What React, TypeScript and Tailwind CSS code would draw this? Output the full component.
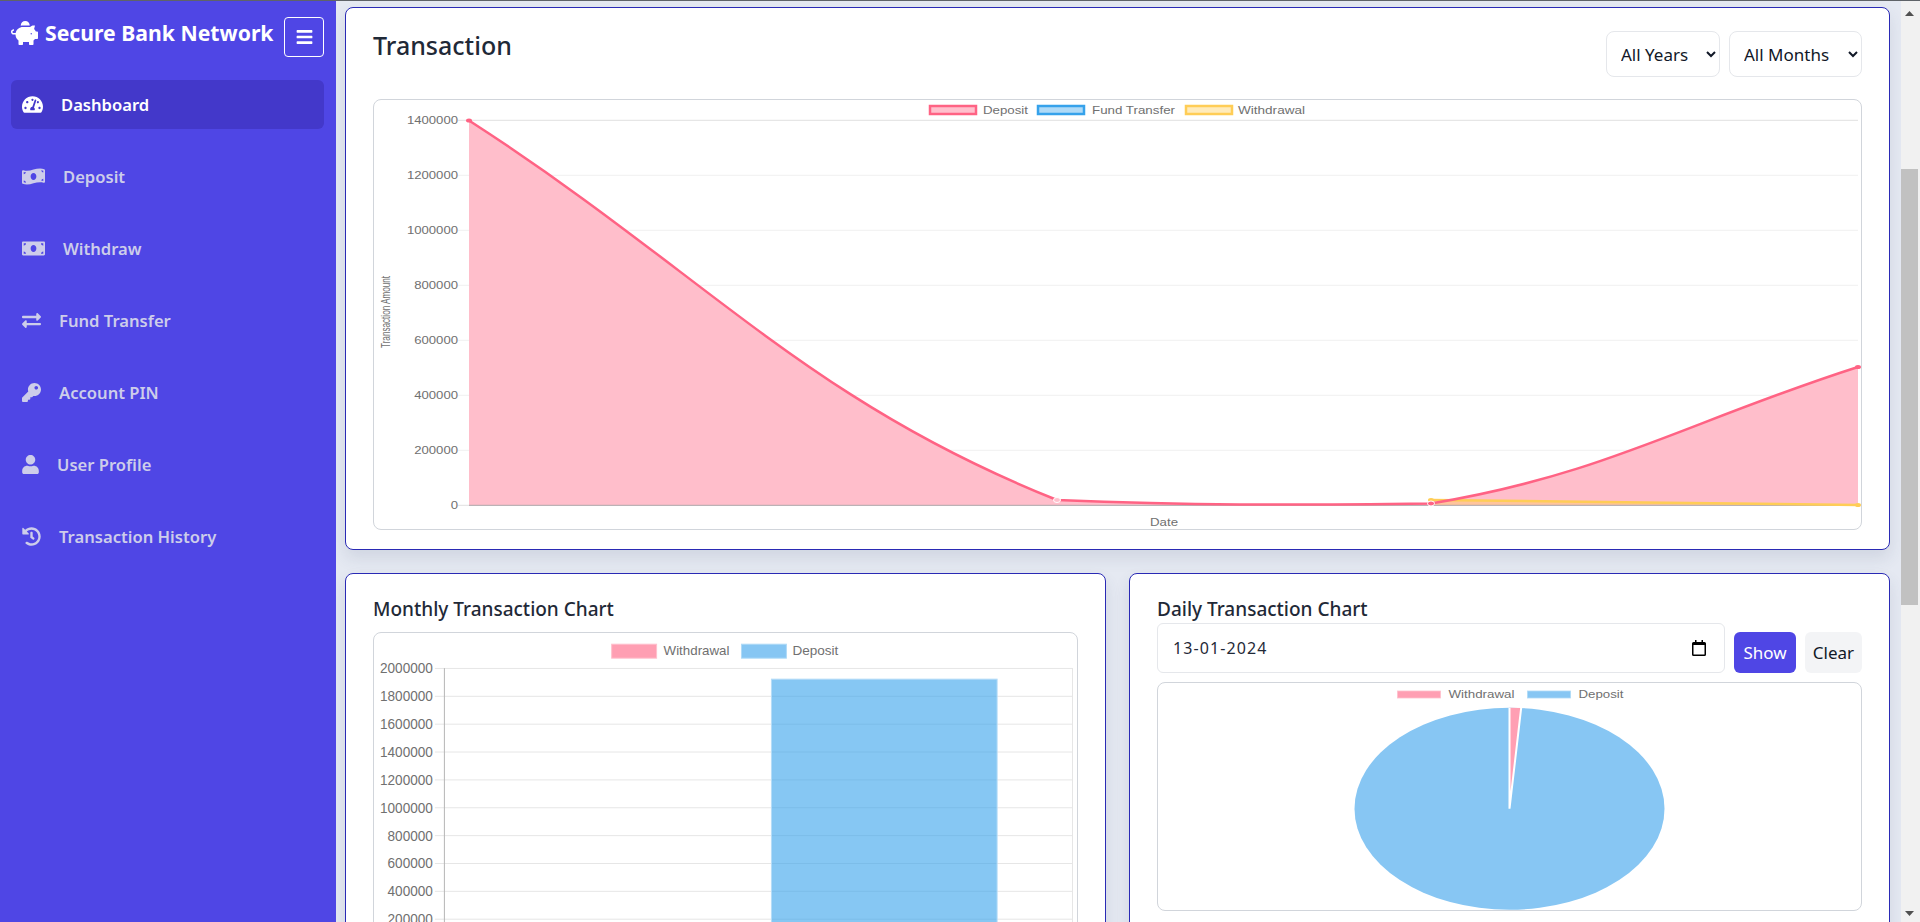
import {
  FaBars,
  FaExchangeAlt,
  FaHistory,
  FaKey,
  FaMoneyBill,
  FaMoneyBillWave,
  FaPiggyBank,
  FaTachometerAlt,
  FaUser,
} from 'react-icons/fa'
import type { IconType } from 'react-icons'

const NAV: { label: string; Icon: IconType; size: string; active?: boolean }[] = [
  { label: 'Dashboard', Icon: FaTachometerAlt, size: 'w-[21px] h-[21px]', active: true },
  { label: 'Deposit', Icon: FaMoneyBillWave, size: 'w-[23px] h-[21px]' },
  { label: 'Withdraw', Icon: FaMoneyBill, size: 'w-[23px] h-[21px]' },
  { label: 'Fund Transfer', Icon: FaExchangeAlt, size: 'w-[19px] h-[19px]' },
  { label: 'Account PIN', Icon: FaKey, size: 'w-[19px] h-[19px]' },
  { label: 'User Profile', Icon: FaUser, size: 'w-[17px] h-[19px]' },
  { label: 'Transaction History', Icon: FaHistory, size: 'w-[19px] h-[19px]' },
]

const FONT = 'font-["Noto_Sans","Open_Sans",sans-serif]'

type Pt = [number, number]

const ZERO = 505.3

// same spline chart.js draws with tension 0.4, control points capped to the plot area
function spline(pts: Pt[], t = 0.4) {
  const dist = (a: Pt, b: Pt) => Math.hypot(a[0] - b[0], a[1] - b[1])
  const cap = (v: number) => Math.min(v, ZERO)
  const ctrl = pts.map((p, i) => {
    const prev = pts[i - 1] ?? p
    const next = pts[i + 1] ?? p
    const d01 = dist(prev, p)
    const d12 = dist(p, next)
    const sum = d01 + d12 || 1
    const dx = next[0] - prev[0]
    const dy = next[1] - prev[1]
    return {
      out: [p[0] + (t * d12 / sum) * dx, cap(p[1] + (t * d12 / sum) * dy)] as Pt,
      in: [p[0] - (t * d01 / sum) * dx, cap(p[1] - (t * d01 / sum) * dy)] as Pt,
    }
  })
  let d = `M${pts[0][0]} ${pts[0][1]}`
  for (let i = 1; i < pts.length; i++) {
    const a = ctrl[i - 1].out
    const b = ctrl[i].in
    d += ` C${a[0]} ${a[1]} ${b[0]} ${b[1]} ${pts[i][0]} ${pts[i][1]}`
  }
  return d
}

const DEPOSIT: Pt[] = [[469, 120.5], [1057, 500], [1431, 503.5], [1858, 367]]
const WITHDRAW: Pt[] = [[1431, 500], [1858, 505]]

const LEGEND = [
  { x: 929, text: 983, w: 45, label: 'Deposit', stroke: '#ff6384', fill: '#ffc0cd' },
  { x: 1037, text: 1092, w: 83, label: 'Fund Transfer', stroke: '#36a2eb', fill: '#afdaf7' },
  { x: 1185, text: 1238, w: 67, label: 'Withdrawal', stroke: '#ffcd56', fill: '#ffebbb' },
]

function TransactionChart() {
  const ticks = [1400000, 1200000, 1000000, 800000, 600000, 400000, 200000, 0]
  return (
    <svg viewBox="374 100 1487 429" className="block w-full h-[429px]">
      {ticks.map((v, i) => {
        const y = 120.3 + i * 55
        const w = String(v).length * 7.3
        return (
          <g key={v}>
            <line x1={458} x2={1858} y1={y} y2={y} stroke={i === 0 || i === 7 ? '#e0e0e0' : '#f0f0f0'} strokeWidth={1} />
            <text x={458 - w} y={y + 3.5} fontSize={10} fill="#707070" fontFamily="Liberation Sans" textLength={w} lengthAdjust="spacingAndGlyphs">{v}</text>
          </g>
        )
      })}
      <path d={`${spline(DEPOSIT)} L1858 ${ZERO} L469 ${ZERO} Z`} fill="#ffbecb" />
      <path d={`${spline(WITHDRAW)} L1858 ${ZERO} L1431 ${ZERO} Z`} fill="#ffcd56" fillOpacity={0.4} />
      <line x1={469} x2={1858} y1={ZERO} y2={ZERO} stroke="#b0a8ac" />
      <path d={spline(WITHDRAW)} fill="none" stroke="#ffcd56" strokeWidth={2.5} />
      <path d={spline(DEPOSIT)} fill="none" stroke="#ff6384" strokeWidth={2.5} />
      <ellipse cx={469} cy={120.5} rx={3} ry={2} fill="#ff6384" />
      <ellipse cx={1057} cy={500} rx={3.5} ry={2.5} fill="#ffc0cd" stroke="#fff" />
      <ellipse cx={1431} cy={500} rx={3} ry={2} fill="#ffcd56" />
      <ellipse cx={1431} cy={503.5} rx={3.5} ry={2.5} fill="#ff6384" stroke="#fff" />
      <ellipse cx={1858} cy={367} rx={3} ry={2} fill="#ff6384" />
      <ellipse cx={1858} cy={505} rx={3} ry={2} fill="#ffcd56" />
      {LEGEND.map((l) => (
        <g key={l.label}>
          <rect x={l.x + 1} y={106} width={46} height={8} fill={l.fill} stroke={l.stroke} strokeWidth={2.5} />
          <text x={l.text} y={113.5} fontSize={10} fill="#707070" fontFamily="Liberation Sans" textLength={l.w} lengthAdjust="spacingAndGlyphs">{l.label}</text>
        </g>
      ))}
      <text x={1150} y={525.5} fontSize={10} fill="#707070" fontFamily="Liberation Sans" textLength={28} lengthAdjust="spacingAndGlyphs">Date</text>
      <text transform="translate(390 348) rotate(-90)" fontSize={13} fill="#707070" fontFamily="Liberation Sans" textLength={72} lengthAdjust="spacingAndGlyphs">Transaction Amount</text>
    </svg>
  )
}

function MonthlyChart() {
  const ticks = [2000000, 1800000, 1600000, 1400000, 1200000, 1000000, 800000, 600000, 400000, 200000]
  return (
    <svg viewBox="374 633 704 300" className="block w-full h-[300px]">
      {ticks.map((v, i) => {
        const y = 668.3 + i * 27.9
        const w = String(v).length * 7.57
        return (
          <g key={v}>
            <line x1={435} x2={1074} y1={y} y2={y} stroke="#e6e6e6" />
            <text x={433 - w} y={y + 5} fontSize={14} fill="#707070" fontFamily="Liberation Sans" textLength={w} lengthAdjust="spacingAndGlyphs">{v}</text>
          </g>
        )
      })}
      <line x1={444.5} x2={444.5} y1={668} y2={933} stroke="#b5b5b5" />
      <line x1={1073.5} x2={1073.5} y1={668} y2={933} stroke="#e6e6e6" />
      <rect x={772} y={679} width={226} height={254} fill="#36a2eb" fillOpacity={0.6} stroke="#b5dcf7" />
      <rect x={612} y={644} width={45} height={14} fill="#ff9fb3" stroke="#ffc0cd" />
      <text x={664} y={655} fontSize={13.5} fill="#707070" fontFamily="Liberation Sans" textLength={66} lengthAdjust="spacingAndGlyphs">Withdrawal</text>
      <rect x={742} y={644} width={45} height={14} fill="#86c6f3" stroke="#afdaf7" />
      <text x={793} y={655} fontSize={13.5} fill="#707070" fontFamily="Liberation Sans" textLength={46} lengthAdjust="spacingAndGlyphs">Deposit</text>
    </svg>
  )
}

function DailyChart() {
  // slice edges on an ellipse, the canvas is stretched
  const cx = 1509
  const cy = 808.7
  const rx = 155
  const ry = 101
  const a = (1.2 / 100) * Math.PI * 2
  const ex = cx + rx * Math.sin(a)
  const ey = cy - ry * Math.cos(a)
  return (
    <svg viewBox="1158 683 702 227" className="block w-full h-[227px]">
      <ellipse cx={cx} cy={cy} rx={rx} ry={ry} fill="#87c6f3" />
      <path d={`M${cx} ${cy} L${cx} ${cy - ry} A${rx} ${ry} 0 0 1 ${ex} ${ey} Z`} fill="#ff9fb3" />
      <path d={`M${cx} ${cy} L${cx} ${cy - ry} M${cx} ${cy} L${ex} ${ey}`} stroke="#fff" strokeWidth={2} fill="none" />
      <rect x={1397} y={691} width={43} height={7} fill="#ff9fb3" stroke="#ffc0cd" strokeWidth={0.8} />
      <text x={1448} y={697.5} fontSize={10.5} fill="#707070" fontFamily="Liberation Sans" textLength={66} lengthAdjust="spacingAndGlyphs">Withdrawal</text>
      <rect x={1527} y={691} width={43} height={7} fill="#87c6f3" stroke="#afdaf7" strokeWidth={0.8} />
      <text x={1578} y={697.5} fontSize={10.5} fill="#707070" fontFamily="Liberation Sans" textLength={45} lengthAdjust="spacingAndGlyphs">Deposit</text>
    </svg>
  )
}

function CalendarIcon() {
  return (
    <svg width="14" height="16" viewBox="0 0 14 16" className="text-black">
      <path d="M3 0h1.5v2h5V0H11v2h1.5A1.5 1.5 0 0 1 14 3.5v11a1.5 1.5 0 0 1-1.5 1.5h-11A1.5 1.5 0 0 1 0 14.5v-11A1.5 1.5 0 0 1 1.5 2H3zM1.5 5v9.5h11V5z" fill="currentColor" fillRule="evenodd" />
    </svg>
  )
}

function Sidebar() {
  return (
    <aside className="w-[336px] shrink-0 bg-[#4f46e5] pl-[11px] pr-[12px] pt-[16px]">
      <div className="flex items-start justify-between h-[40px] mb-[23px]">
        <div className="flex items-center h-[32px] gap-[7px] text-white">
          <FaPiggyBank className="w-[27px] h-[24px]" />
          <span className="text-[21.2px] font-bold leading-none">Secure Bank Network</span>
        </div>
        <button className="w-[40px] h-[40px] flex items-center justify-center border border-white rounded text-white">
          <FaBars className="w-[17px] h-[18px]" />
        </button>
      </div>
      <nav className="flex flex-col gap-[23px]">
        {NAV.map(({ label, Icon, size, active }) => (
          <a
            key={label}
            className={`flex items-center gap-[18px] h-[49px] pl-[11px] rounded-md text-[16.6px] font-semibold ${active ? 'bg-[#4338ca] text-white' : 'text-[#cdcdea]'}`}
          >
            <Icon className={size} />
            <span className="pt-[2px]">{label}</span>
          </a>
        ))}
      </nav>
    </aside>
  )
}

function Scrollbar() {
  return (
    <div className="w-[19px] shrink-0 bg-[#f1f1f1] flex flex-col items-start">
      <div className="w-[17px] h-[24px] flex items-center justify-center text-[#505050]">
        <svg width="9" height="5" viewBox="0 0 9 5"><path d="M4.5 0 9 5H0z" fill="currentColor" /></svg>
      </div>
      <div className="w-[17px] h-[436px] mt-[144px] bg-[#c1c1c1]" />
      <div className="w-[17px] flex-1 flex items-end justify-center pb-[6px] text-[#505050]">
        <svg width="9" height="5" viewBox="0 0 9 5"><path d="M4.5 5 9 0H0z" fill="currentColor" /></svg>
      </div>
    </div>
  )
}

export default function App() {
  const card = 'bg-white border border-[#2a2ab5] rounded-lg shadow-[0_8px_16px_rgba(60,70,110,0.12)]'
  const box = 'border border-[#d1d5db] rounded-lg overflow-hidden'
  const select = 'h-[46px] bg-white border border-[#e5e7eb] rounded-lg pl-[10px] text-[17px] text-[#111827]'

  return (
    <div className={`${FONT} h-screen w-full overflow-hidden flex flex-col`}>
      <div className="h-px bg-[#5f6368] shrink-0" />
      <div className="flex flex-1 min-h-0">
        <Sidebar />
        <main className="flex-1 min-w-0 bg-[#e5e9f2] pl-[9px] pr-[11px] pt-[6px] overflow-hidden flex flex-col gap-[23px]">
          <section className={`${card} shrink-0 h-[543px] px-[27px] pt-[23px]`}>
            <div className="flex justify-between mb-[22px]">
              <h1 className="text-[25px] font-medium leading-[28px] text-[#1f2937] self-start">Transaction</h1>
              <div className="flex gap-[9px]">
                <select className={`${select} w-[114px]`} defaultValue="all">
                  <option value="all">All Years</option>
                </select>
                <select className={`${select} w-[133px]`} defaultValue="all">
                  <option value="all">All Months</option>
                </select>
              </div>
            </div>
            <div className={box}>
              <TransactionChart />
            </div>
          </section>

          <div className="grid grid-cols-[761px_1fr] gap-[23px] shrink-0">
            <section className={`${card} h-[400px] px-[27px] pt-[21px]`}>
              <h2 className="text-[19px] font-medium leading-[28px] text-[#1f2937] mb-[9px]">Monthly Transaction Chart</h2>
              <div className={box}>
                <MonthlyChart />
              </div>
            </section>
            <section className={`${card} h-[400px] px-[27px] pt-[21px]`}>
              <h2 className="text-[19px] font-medium leading-[28px] text-[#1f2937]">Daily Transaction Chart</h2>
              <div className="flex items-end gap-[9px] mb-[9px]">
                <div className="flex-1 h-[50px] flex items-center justify-between pl-[15px] pr-[18px] border border-[#e5e7eb] rounded-md text-[16px] tracking-[1.1px] text-[#1f2937]">
                  <span>13-01-2024</span>
                  <CalendarIcon />
                </div>
                <button className="w-[62px] h-[41px] rounded-md bg-[#4f46e5] text-white text-[17px]">Show</button>
                <button className="w-[57px] h-[41px] rounded-md bg-[#f3f4f6] text-[#111827] text-[17px]">Clear</button>
              </div>
              <div className={box}>
                <DailyChart />
              </div>
            </section>
          </div>
        </main>
        <Scrollbar />
      </div>
    </div>
  )
}
